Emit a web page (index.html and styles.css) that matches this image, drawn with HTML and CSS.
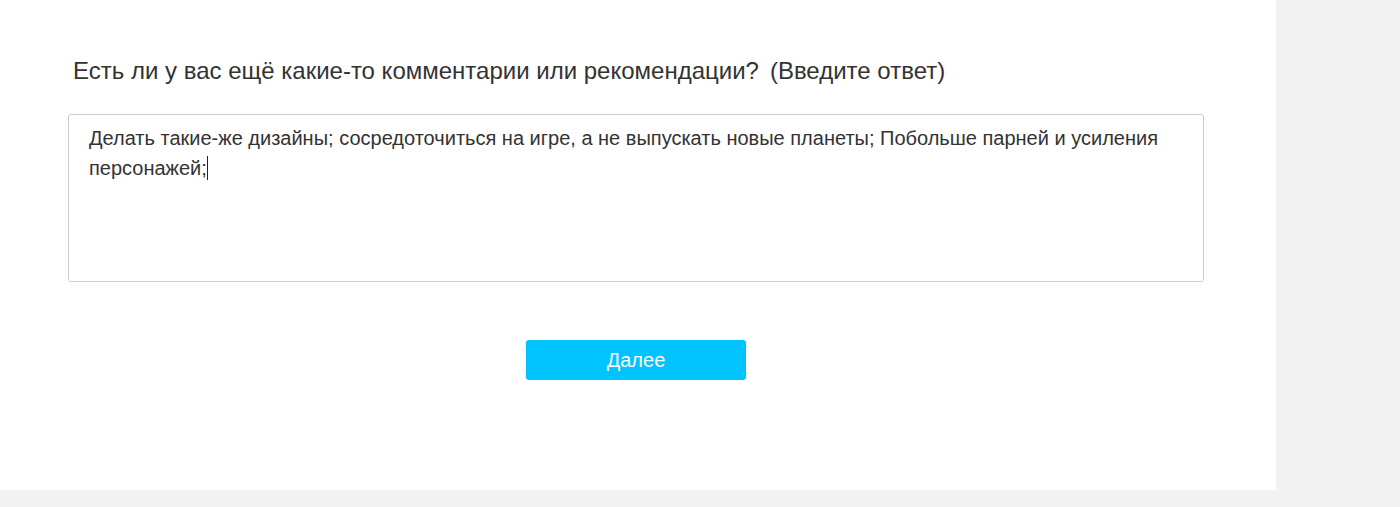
FILE: index.html
```html
<!DOCTYPE html>
<html lang="ru">
<head>
<meta charset="utf-8">
<link rel="stylesheet" href="styles.css">
</head>
<body>
<div class="panel">
  <div class="question">Есть ли у вас ещё какие-то комментарии или рекомендации?<span class="hint">(Введите ответ)</span></div>
  <div class="answer"><span>Делать такие-же дизайны; сосредоточиться на игре, а не выпускать новые планеты; Побольше парней и усиления персонажей;</span><span class="caret"></span></div>
  <div class="actions"><button class="next">Далее</button></div>
</div>
</body>
</html>
```
FILE: styles.css
```css
html, body {
  margin: 0;
  padding: 0;
  background: #f2f2f2;
  font-family: "Liberation Sans", Arial, sans-serif;
  color: #333;
}
.panel {
  width: 1276px;
  height: 490px;
  background: #fff;
  box-sizing: border-box;
  padding: 55px 0 0 68px;
}
.question {
  font-size: 24px;
  line-height: 32px;
  padding-left: 5px;
  color: #333;
}
.hint {
  margin-left: 11px;
}
.answer {
  margin-top: 27px;
  width: 1136px;
  height: 168px;
  box-sizing: border-box;
  border: 1px solid #ccc;
  border-radius: 3px;
  padding: 8px 20px;
  font-size: 20px;
  line-height: 30px;
  color: #333;
}
.caret {
  display: inline-block;
  width: 1px;
  height: 24px;
  background: #222;
  vertical-align: -5px;
}
.actions {
  width: 1136px;
  display: flex;
  justify-content: center;
  margin-top: 58px;
}
.next {
  width: 220px;
  height: 40px;
  background: #00c3ff;
  border: none;
  border-radius: 3px;
  color: #fff;
  font-family: "Liberation Sans", Arial, sans-serif;
  font-size: 20px;
  padding: 0;
}
```
